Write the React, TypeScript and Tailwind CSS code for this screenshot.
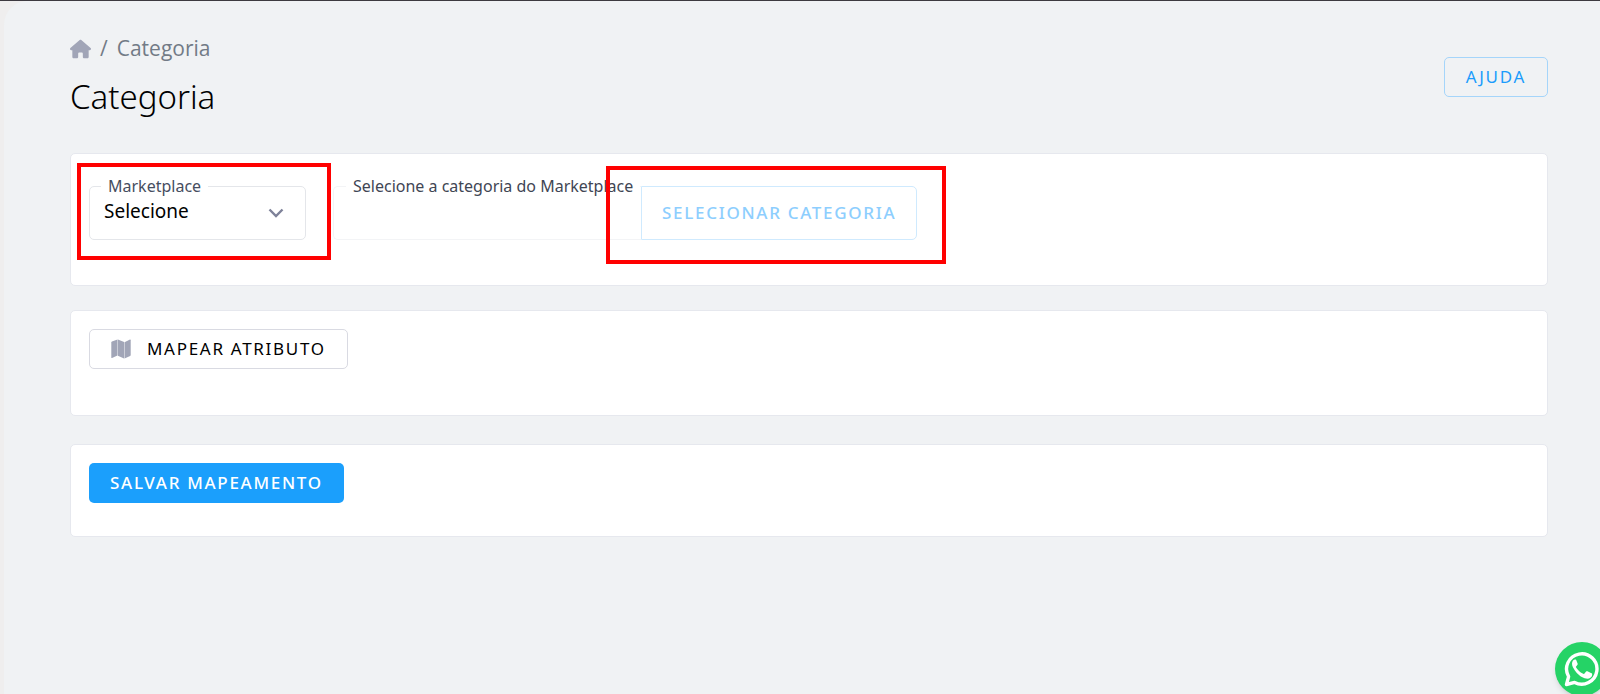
import React from "react";
import { FaHouse } from "react-icons/fa6";

function Card({ className, children }: { className: string; children: React.ReactNode }) {
  return (
    <section className={`rounded-[5px] border border-[#e6e8ee] bg-white px-[18px] ${className}`}>
      {children}
    </section>
  );
}

function Highlight({ className }: { className: string }) {
  return <span aria-hidden="true" className={`pointer-events-none absolute border-4 border-[#ff0000] ${className}`} />;
}

function MapIcon() {
  return (
    <svg aria-hidden="true" viewBox="0 0 20 20" className="size-5 text-[#a1a5b7]" fill="currentColor">
      <path d="M6.500.5v16L1 19q-.7.200-.7-.6V3.500q0-.7.600-1z" />
      <path d="M6.900.5 13.100 3v16.500L6.900 16.800z" />
      <path d="M13.500 3.200 19 .6q.7-.2.700.600V16q0 .7-.6 1L13.500 19.400z" />
    </svg>
  );
}

function WhatsAppIcon() {
  return (
    <svg aria-hidden="true" viewBox="0 0 36 36" className="size-9">
      <path
        d="M2.500 33.500 4.600 25.600A15.200 15.200 0 1 1 10.600 31.400Z"
        fill="none"
        stroke="currentColor"
        strokeWidth="3.400"
        strokeLinejoin="round"
      />
      <path
        d="M12.300 9.200c-.4-.8-.7-.8-1.300-.8-1.200 0-3 1.500-3 4.400 0 2.700 2 5.300 2.400 5.900.4.500 4.100 6.500 10.200 8.500 4.200 1.400 6.600-.5 7.200-1.900.4-1 .5-2.100.3-2.600-.2-.3-.6-.5-1.100-.7l-3.500-1.700c-.6-.2-1-.3-1.400.3l-1.600 2c-.3.400-.6.400-1.200.1-.5-.3-2.300-.8-4.300-2.700-1.600-1.400-2.700-3.200-3-3.700-.3-.6 0-.8.300-1.100l1.200-1.500c.2-.4.300-.6.100-1.100z"
        fill="currentColor"
      />
    </svg>
  );
}

export default function App() {
  return (
    <div className="min-h-screen border-t border-[#3d3a40] bg-[#efeeee] pl-1 font-['Noto_Sans',sans-serif] text-black">
      <main className="min-h-screen rounded-tl-3xl bg-[#f0f2f4] pr-[52px] pb-10 pl-[66px]">
        <header className="flex items-start justify-between pt-8">
          <div>
            <nav aria-label="Breadcrumb" className="flex h-8 items-center font-['Open_Sans',sans-serif] text-[21px] text-[#727b86]">
              <a href="#" aria-label="Início" className="text-[#a1a5b7]">
                <FaHouse className="h-5 w-[21px]" />
              </a>
              <span className="px-[9px]">/</span>
              <span>Categoria</span>
            </nav>
            <h1 className="mt-[10px] text-[33px] leading-[44px] font-light">Categoria</h1>
          </div>
          <button type="button" className="mt-6 h-10 rounded-[5px] border border-[#a5d5fa] px-[21px] text-[17px] tracking-widest text-[#1b9cfc]">
            AJUDA
          </button>
        </header>

        <Card className="mt-[34px] flex h-[133px] items-start pt-8">
          <div className="relative w-[217px]">
            <label htmlFor="marketplace" className="absolute -top-3 left-3 bg-white px-[7px] text-base text-[#464e5f]">
              Marketplace
            </label>
            <select
              id="marketplace"
              className="h-[54px] w-full appearance-none rounded-[5px] border border-[#e4e6ea] bg-transparent pb-[3px] pl-[14px] text-[19px]"
            >
              <option>Selecione</option>
            </select>
            <svg aria-hidden="true" viewBox="0 0 16 10" className="pointer-events-none absolute top-[22px] right-[22px] h-[10px] w-4" fill="none" stroke="#7e8299" strokeWidth="2.4">
              <path d="M1.5 1.5 8 8l6.500-6.500" />
            </svg>
            <Highlight className="-top-[23px] -right-[25px] -bottom-5 -left-3" />
          </div>
          <div className="ml-[27px] flex">
            <div className="relative h-[54px] w-[308px] rounded-l-[5px] border border-r-0 border-[#f3f4f6]">
              <span className="absolute -top-[13px] left-3 bg-white px-[7px] text-base whitespace-nowrap text-[#3f4654]">
                Selecione a categoria do Marketplace
              </span>
            </div>
            <div className="relative">
              <button type="button" disabled className="h-[54px] rounded-r-[5px] border border-[#cfeafe] px-5 text-[17px] font-medium tracking-widest text-[#8dcefe]">
                SELECIONAR CATEGORIA
              </button>
              <Highlight className="-top-5 -right-[29px] -bottom-6 -left-[35px]" />
            </div>
          </div>
        </Card>

        <Card className="mt-6 h-[106px] pt-[18px]">
          <button type="button" className="flex h-10 items-center gap-4 rounded-[5px] border border-[#d9dae2] px-[21px] text-[17px] tracking-widest">
            <MapIcon />
            MAPEAR ATRIBUTO
          </button>
        </Card>

        <Card className="mt-7 h-[93px] pt-[18px]">
          <button type="button" className="h-10 rounded-[5px] bg-[#1b9ffc] px-[21px] text-[17px] font-medium tracking-widest text-white">
            SALVAR MAPEAMENTO
          </button>
        </Card>
      </main>

      <a
        href="#"
        aria-label="WhatsApp"
        className="fixed -right-[9px] -bottom-[2px] flex size-[54px] items-center justify-center rounded-full bg-[#25d366] text-white shadow-md"
      >
        <WhatsAppIcon />
      </a>
    </div>
  );
}
